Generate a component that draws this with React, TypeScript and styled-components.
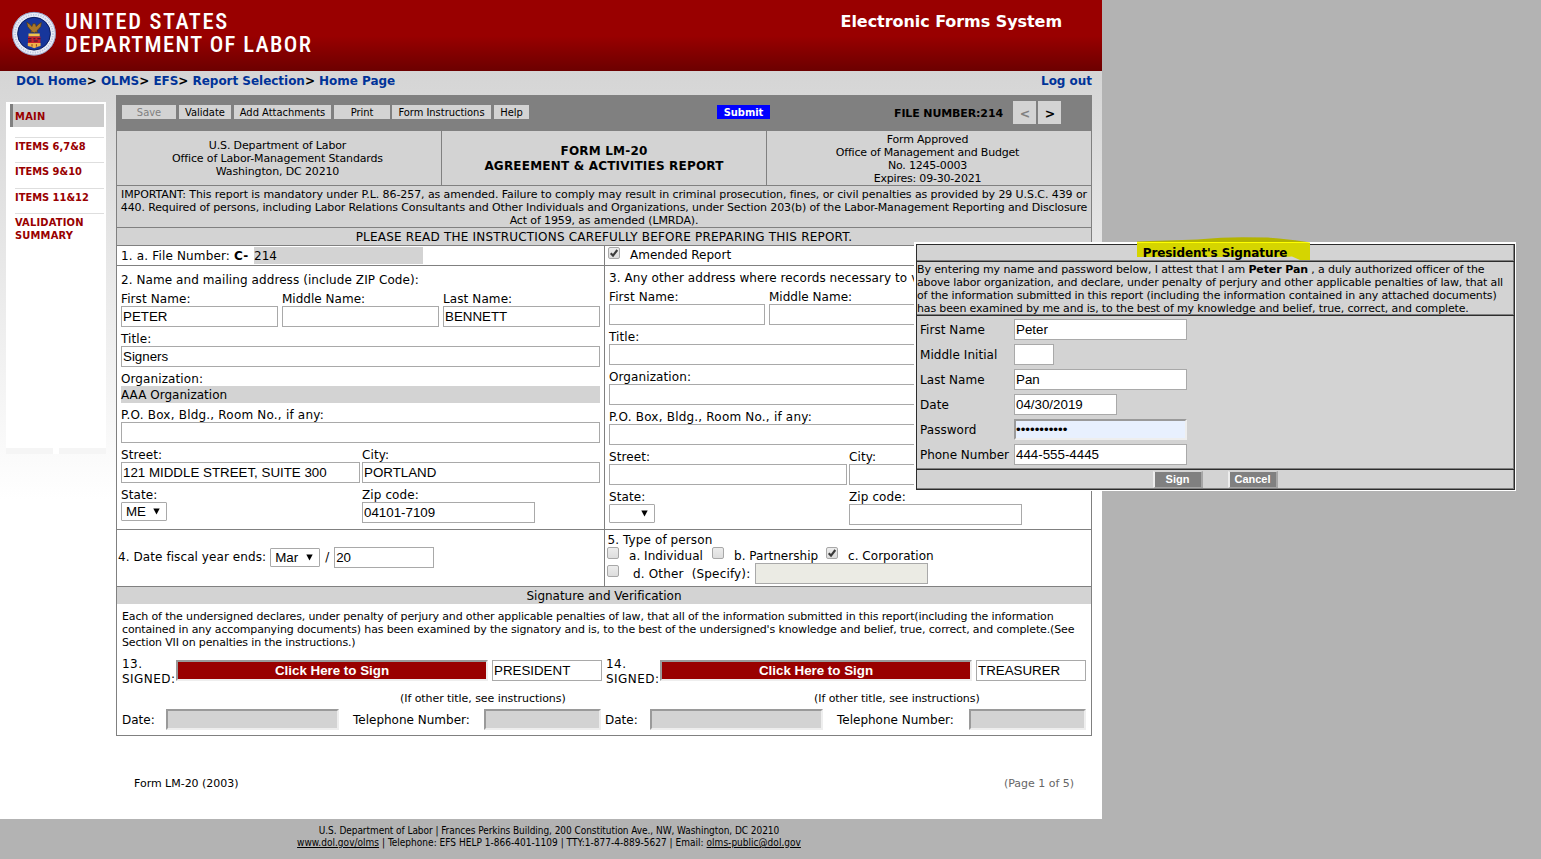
import React from 'react';
import styled, { createGlobalStyle, css } from 'styled-components';

const VERDANA = 'Verdana, "DejaVu Sans", sans-serif';
const TAHOMA = 'Tahoma, "DejaVu Sans Condensed", "DejaVu Sans", sans-serif';
const ARIAL = '"Liberation Sans", Arial, sans-serif';
const LINE = '#808080';
const PANEL = '#d3d3d3';

const GlobalStyle = createGlobalStyle`
  *, *::before, *::after { box-sizing: border-box; }
  body {
    margin: 0;
    background: #b3b3b3;
    color: #000;
    font: 12px/15px ${VERDANA};
  }
  button, input { margin: 0; border-radius: 0; outline: none; }
`;

const Screen = styled.div`
  position: relative;
  width: 1541px;
  height: 859px;
  overflow: hidden;
`;

const Page = styled.div`
  width: 1102px;
  height: 819px;
  background: linear-gradient(#d5d5d5 71px, #fff 500px);
`;

/* ---------- Banner ---------- */

const Banner = styled.header`
  display: flex;
  justify-content: space-between;
  height: 71px;
  padding: 10px 40px 0 11px;
  background: linear-gradient(#990000 36px, #6c0000 71px);
  color: #fff;
`;

const Brand = styled.div`
  display: flex;
  gap: 8px;
`;

const BrandName = styled.div`
  font: 500 22.5px/23px "Roboto Condensed", Roboto, sans-serif;
  white-space: nowrap;
`;

const BrandLine = styled.div<{ $ls: number }>`
  letter-spacing: ${(p) => p.$ls}px;
`;

const SystemName = styled.div`
  padding-top: 1px;
  font: bold 16px/22px ${VERDANA};
  letter-spacing: -0.06px;
`;

/* ---------- Breadcrumb ---------- */

const CrumbBar = styled.nav`
  display: flex;
  justify-content: space-between;
  height: 24px;
  padding: 3px 10px 0 16px;
  font: bold 12px/15px ${VERDANA};
  letter-spacing: -0.03px;
`;

const Link = styled.a`
  color: #003399;
  text-decoration: none;
`;

/* ---------- Sidebar ---------- */

const Body = styled.div`
  display: flex;
  gap: 10px;
  padding-left: 6px;
`;

const SideColumn = styled.aside`
  width: 100px;
  padding-top: 7px;
`;

const SideMenu = styled.div`
  height: 346px;
  padding: 2px 2px 0 4px;
  background: #fff;
  font: bold 11px/13px ${TAHOMA};
  color: #990000;
`;

const CurrentItem = styled.div`
  height: 23px;
  margin-bottom: 10px;
  padding: 6px 0 0 2px;
  border-left: 3px solid ${LINE};
  background: #ccc;
  letter-spacing: 0.3px;
`;

const SideItem = styled.div<{ $ls?: number }>`
  height: 25.4px;
  margin-left: 5px;
  padding-top: 2px;
  border-top: 1px solid #dedede;
  letter-spacing: ${(p) => p.$ls ?? 0}px;
`;

const SideTabs = styled.div`
  display: flex;
  justify-content: space-between;
  height: 6px;
  background: #fff;
`;

const SideTab = styled.div`
  width: 47px;
  background: #f5f5f5;
`;

/* ---------- Form frame ---------- */

const FormColumn = styled.main`
  width: 976px;
`;

const FormBox = styled.div`
  height: 641px;
  border: 1px solid ${LINE};
  border-top: 0;
  background: #fff;
`;

const Toolbar = styled.div`
  display: flex;
  gap: 3px;
  height: 36px;
  padding: 10px 0 0 5px;
  background: ${LINE};
`;

const ToolButton = styled.button<{ $w: number; $primary?: boolean; $off?: boolean; $tight?: boolean }>`
  width: ${(p) => p.$w}px;
  height: 14px;
  margin-right: ${(p) => (p.$tight ? -1 : 0)}px;
  padding: 1px 0 0;
  border: 0;
  background: ${(p) => (p.$primary ? '#0000ff' : PANEL)};
  color: ${(p) => (p.$primary ? '#fff' : p.$off ? '#808080' : '#000')};
  font: ${(p) => (p.$primary ? 'bold' : 'normal')} 11px/13px ${TAHOMA};
  white-space: nowrap;
`;

const SubmitSlot = styled.div`
  display: flex;
  margin-left: 185px;
`;

const FileNumber = styled.div`
  width: 119px;
  margin-left: 121px;
  padding-top: 2px;
  font: bold 11px/13px ${VERDANA};
  letter-spacing: -0.12px;
  white-space: nowrap;
`;

const Pager = styled.div`
  display: flex;
  gap: 2px;
  margin: -4px 0 0 -3px;
`;

const PageButton = styled.button<{ $off?: boolean }>`
  width: 23px;
  height: 23px;
  padding: 2px 0 0 1px;
  border: 0;
  background: ${PANEL};
  color: ${(p) => (p.$off ? '#808080' : '#000')};
  font: bold 12.5px/20px ${VERDANA};
`;

const TitleRow = styled.div`
  display: flex;
  height: 55px;
  border-bottom: 1px solid ${LINE};
  background: ${PANEL};
`;

const TitleCell = styled.div<{ $strong?: boolean; $ls?: number; $top?: number }>`
  display: flex;
  flex-direction: column;
  justify-content: center;
  flex: 1;
  padding: ${(p) => p.$top ?? 0}px 3px 0 0;
  text-align: center;
  font: 11px/13px ${VERDANA};
  letter-spacing: ${(p) => p.$ls ?? -0.14}px;
  ${(p) =>
    p.$strong &&
    css`
      flex: 0 0 326px;
      padding: 1px 0 0;
      border: solid ${LINE};
      border-width: 0 1px;
      font: bold 12px/15px ${VERDANA};
      letter-spacing: 0.2px;
    `}
`;

const Notice = styled.div`
  height: 42px;
  padding-top: 2px;
  border-bottom: 1px solid ${LINE};
  background: ${PANEL};
  font: 11px/13px ${VERDANA};
  letter-spacing: -0.13px;
  text-align: center;
  white-space: nowrap;
`;

const NoticeLead = styled.div`
  letter-spacing: -0.084px;
`;

const Instruction = styled.div`
  height: 18px;
  padding-top: 2px;
  border-bottom: 1px solid ${LINE};
  background: ${PANEL};
  letter-spacing: 0.197px;
  text-align: center;
`;

const Split = styled.div<{ $h: number }>`
  display: grid;
  grid-template-columns: 488px 486px;
  height: ${(p) => p.$h}px;
  border-bottom: 1px solid ${LINE};
  & > :first-child {
    border-right: 1px solid ${LINE};
  }
`;

const Half = styled.div`
  overflow: hidden;
  white-space: nowrap;
`;

const FileCell = styled(Half)`
  display: flex;
  align-items: center;
  padding-left: 4px;
  letter-spacing: 0.16px;
`;

const FileLabel = styled.span`
  width: 133px;
  padding-top: 1px;
`;

const ReadOnlyValue = styled.span<{ $w: number }>`
  display: block;
  width: ${(p) => p.$w}px;
  height: 17px;
  background: ${PANEL};
  line-height: 18px;
  letter-spacing: 0.02px;
`;

const AmendedCell = styled(Half)`
  display: flex;
  gap: 10px;
  padding: 1px 0 0 3px;
  line-height: 17px;
`;

/* ---------- Form controls ---------- */

const inset = css`
  border: 2px solid;
  border-color: #9a9a9a #eeeeee #eeeeee #9a9a9a;
`;

const Input = styled.input<{ $w: number; $tone?: 'plain' | 'autofill' | 'inset' | 'disabled' }>`
  display: block;
  flex: none;
  width: ${(p) => p.$w}px;
  height: 21px;
  padding: 1px;
  border: 1px solid #a9a9a9;
  background: #fff;
  color: #000;
  font: 13.333px/17px ${ARIAL};
  ${(p) => p.$tone === 'disabled' && 'background: #ebebe4;'}
  ${(p) =>
    p.$tone === 'inset' &&
    css`
      ${inset}
      background: ${PANEL};
    `}
  ${(p) =>
    p.$tone === 'autofill' &&
    css`
      ${inset}
      padding: 0;
      background: #e8f0fe;
    `}
`;

const SelectBox = styled.div<{ $w: number }>`
  display: flex;
  flex: none;
  justify-content: space-between;
  align-items: center;
  width: ${(p) => p.$w}px;
  height: 19px;
  padding: 0 6px 0 4px;
  border: 1px solid #a9a9a9;
  border-radius: 1px;
  background: #fff;
  font: 13.333px/17px ${ARIAL};
  letter-spacing: 0;
`;

const Select = ({ w, value }: { w: number; value?: string }) => (
  <SelectBox $w={w}>
    <span>{value}</span>
    <svg width="7" height="7" viewBox="0 0 7 7">
      <path d="M0.3 0.5h6.4L3.5 6.5z" fill="#000" />
    </svg>
  </SelectBox>
);

const CheckFrame = styled.span`
  display: flex;
  flex: none;
  width: 12px;
  height: 12px;
  border: 1px solid #a8a8a8;
  border-radius: 2px;
  background: linear-gradient(#ececec, #dddddd);
`;

const Check = ({ on }: { on?: boolean }) => (
  <CheckFrame>
    {on && (
      <svg width="10" height="10" viewBox="0 0 10 10">
        <path d="M1.7 5.3 4 7.6 8.3 2" fill="none" stroke="#3c3c3c" strokeWidth="2.1" />
      </svg>
    )}
  </CheckFrame>
);

const Address = styled(Half)<{ $top: number }>`
  padding: ${(p) => p.$top}px 4px 0;
`;

const FieldRow = styled.div`
  display: flex;
`;

const FieldBox = styled.div<{ $w: number; $gap?: number }>`
  flex: none;
  width: ${(p) => p.$w}px;
  margin-right: ${(p) => p.$gap ?? 0}px;
`;

const Label = styled.div<{ $ls?: number }>`
  height: 19px;
  padding-top: 5px;
  line-height: 14px;
  letter-spacing: ${(p) => p.$ls ?? 0.1}px;
`;

const Heading = styled.div<{ $w?: number }>`
  width: ${(p) => (p.$w ? `${p.$w}px` : 'auto')};
  height: 15px;
  overflow: hidden;
  line-height: 16px;
  letter-spacing: 0.08px;
`;

interface FieldProps {
  label?: string;
  w: number;
  gap?: number;
  inner?: number;
  ls?: number;
  value?: string;
  kind?: 'input' | 'select' | 'readonly';
}

const Field = ({ label, w, gap, inner, ls, value, kind = 'input' }: FieldProps) => (
  <FieldBox $w={w} $gap={gap}>
    <Label $ls={ls}>{label}</Label>
    {kind === 'input' && <Input $w={inner ?? w} defaultValue={value} />}
    {kind === 'select' && <Select w={inner ?? w} value={value} />}
    {kind === 'readonly' && <ReadOnlyValue $w={w}>{value}</ReadOnlyValue>}
  </FieldBox>
);

const FiscalCell = styled(Half)`
  display: flex;
  align-items: center;
  gap: 4px;
  padding: 0 0 1px 1px;
  letter-spacing: 0.08px;
`;

const Slash = styled.span`
  width: 6px;
  padding-left: 1px;
`;

const PersonCell = styled(Half)`
  padding: 2px 0 0 2px;
`;

const PersonTitle = styled.div`
  height: 15px;
  padding: 1px 0 0 0.5px;
  line-height: 14px;
  letter-spacing: 0.1px;
`;

const PersonRow = styled.div<{ $h: number }>`
  display: flex;
  height: ${(p) => p.$h}px;
`;

const CheckSlot = styled.div`
  padding-top: 2px;
`;

const Option = styled.span<{ $w: number; $x?: number; $y?: number; $ls?: number }>`
  flex: none;
  width: ${(p) => p.$w}px;
  padding: ${(p) => p.$y ?? 2}px 0 0 ${(p) => p.$x ?? 10}px;
  line-height: 14px;
  letter-spacing: ${(p) => p.$ls ?? 0.04}px;
  white-space: pre;
`;

/* ---------- Signature section ---------- */

const Band = styled.div`
  height: 17px;
  background: ${PANEL};
  line-height: 18px;
  letter-spacing: -0.02px;
  text-align: center;
`;

const Declaration = styled.div`
  height: 56px;
  padding: 6px 0 0 5px;
  font: 11px/13px ${VERDANA};
  letter-spacing: -0.147px;
  white-space: nowrap;
`;

const SignRow = styled.div`
  display: flex;
  gap: 4px;
  height: 30px;
  padding-left: 5px;
`;

const SignBlock = styled.div`
  display: flex;
  width: 480px;
`;

const SignLabel = styled.div`
  width: 54px;
  margin-top: -3px;
  letter-spacing: 0.45px;
`;

const SignButton = styled.button`
  ${inset}
  width: 312px;
  height: 21px;
  margin-right: 4px;
  padding: 0;
  background: #990000;
  color: #fff;
  font: bold 13.333px/17px ${ARIAL};
`;

const HintRow = styled.div`
  display: flex;
  height: 19px;
  padding-top: 1px;
  font: 11px/15px ${VERDANA};
  letter-spacing: -0.06px;
`;

const Hint = styled.span<{ $left: number }>`
  width: 166px;
  margin-left: ${(p) => p.$left}px;
  white-space: nowrap;
`;

const DateRow = styled.div`
  display: flex;
  padding-left: 5px;
  line-height: 22px;
`;

const DateCell = styled.span<{ $w: number; $x?: number }>`
  flex: none;
  width: ${(p) => p.$w}px;
  height: 21px;
  padding-left: ${(p) => p.$x ?? 0}px;
  white-space: nowrap;
`;

const PageInfo = styled.div`
  display: flex;
  justify-content: space-between;
  padding: 41px 18px 0 18px;
  font: 11px/13px ${VERDANA};
  letter-spacing: -0.02px;
`;

const PageCount = styled.span`
  color: #666;
`;

const Footer = styled.footer`
  width: 1098px;
  padding-top: 6px;
  font: 10px/12px ${TAHOMA};
  letter-spacing: -0.054px;
  text-align: center;
`;

const Contact = styled.div`
  letter-spacing: 0.023px;
`;

/* ---------- Signature dialog ---------- */

const Dialog = styled.section`
  position: absolute;
  left: 914px;
  top: 242px;
  width: 602px;
  height: 249px;
  border: solid #fff;
  border-width: 2px 1px 1px 2px;
`;

const DialogFrame = styled.div`
  height: 246px;
  border: 1px solid #2c2c2c;
  background: ${PANEL};
`;

const DialogSection = styled.div<{ $h: number; $last?: boolean }>`
  height: ${(p) => p.$h}px;
  border-right: 1px solid ${LINE};
  border-bottom: 1px solid ${LINE};
  ${(p) => !p.$last && 'box-shadow: 0 1px #2c2c2c; margin-bottom: 1px;'}
`;

const DialogTitle = styled(DialogSection)`
  font: bold 12px/16px ${VERDANA};
  letter-spacing: -0.09px;
  text-align: center;
`;

const TitleText = styled.span`
  position: relative;
  z-index: 2;
`;

const Highlight = styled.svg`
  position: absolute;
  z-index: 1;
  left: 221px;
  top: -7px;
`;

const Statement = styled(DialogSection)`
  padding-top: 1px;
  font: 11px/13px ${VERDANA};
  letter-spacing: -0.152px;
  white-space: nowrap;
`;

const StatementLead = styled.div`
  letter-spacing: -0.115px;
`;

const DialogFields = styled(DialogSection)`
  display: flex;
  flex-direction: column;
  gap: 4px;
  padding: 3px 0 0 3px;
`;

const DialogRow = styled.label`
  display: flex;
  height: 21px;
  line-height: 22px;
`;

const DialogLabel = styled.span<{ $ls?: number }>`
  width: 94px;
  letter-spacing: ${(p) => p.$ls ?? 0.05}px;
  white-space: nowrap;
`;

const DialogActions = styled(DialogSection)`
  display: flex;
  justify-content: center;
  gap: 25px;
  padding-top: 1px;
`;

const DialogButton = styled.button`
  width: 50px;
  height: 17px;
  padding: 0;
  border: solid;
  border-width: 1px 2px;
  border-color: ${PANEL} #a6a6a6 #a6a6a6 #eeeeee;
  background: #808080;
  color: #fff;
  font: bold 11px/13px ${ARIAL};
`;

const Seal = () => (
  <svg width="46" height="46" viewBox="0 0 46 46">
    <circle cx="23" cy="23.7" r="21.8" fill="#e9ecf6" />
    <circle cx="23" cy="23.7" r="21.4" fill="none" stroke="#6f7fb5" strokeWidth="0.7" />
    <circle cx="23" cy="23.7" r="18.9" fill="none" stroke="#bac4e2" strokeWidth="1.8" strokeDasharray="1.2 1.3" />
    <circle cx="23" cy="23.7" r="16.4" fill="#17369b" stroke="#0c1c5e" strokeWidth="1" />
    <path
      d="M15.8 12.2 18.4 14l2.6 2.6.8-2.8h2.6l.8 2.8 2.4-2.4 2.8-1.8-.6 4.2-2.6 3-1.2 1 .6 1.8-2-.4-1.4 1-1.4-1-2 .4.6-1.8-1.4-1-2.4-3z"
      fill="#a8762a"
      stroke="#4a3514"
      strokeWidth="0.6"
    />
    <path d="M17.5 23.5h11.2v3H17.5z" fill="#f1c34c" />
    <path d="M17 26.5h12.4v6.5H17z" fill="#c4202a" />
    <path d="M17 28.8h3.4m2 0h2m2 0h3M17.5 31h3m2.2 0h4" stroke="#2c1333" strokeWidth="1.1" />
    <path d="M16.8 33h12.8v3l-3 .8-3.4 1.4-3.4-1.4-3-.8z" fill="#efb24a" />
    <path d="M21 34.2v2.4m4.4-2.4v2.4" stroke="#8c3a1c" strokeWidth="1" />
  </svg>
);

const MARK =
  'M0 4.5 12 4 38 3.2 60 2.4 84 .8 105 .2 131 .5 142 1.6 158 3.2 167 4.5 173 5.5V23H163L155 19.5 146 20H0z';

const HighlightMark = () => (
  <Highlight width="173" height="24" viewBox="0 0 173 24">
    <defs>
      <clipPath id="mark">
        <path d={MARK} />
      </clipPath>
    </defs>
    <g clipPath="url(#mark)">
      <rect width="173" height="5" fill="#b4b400" />
      <rect y="5" width="173" height="2" fill="#ffff00" />
      <rect y="6" width="173" height="18" fill="#d5d500" />
    </g>
  </Highlight>
);

const crumbs = ['DOL Home', 'OLMS', 'EFS', 'Report Selection', 'Home Page'];
const menu = ['ITEMS 6,7&8', 'ITEMS 9&10', 'ITEMS 11&12'];
const signers = [
  { no: '13.', title: 'PRESIDENT' },
  { no: '14.', title: 'TREASURER' },
];

export default function App() {
  return (
    <Screen>
      <GlobalStyle />
      <Page>
        <Banner>
          <Brand>
            <Seal />
            <BrandName>
              <BrandLine $ls={1.6}>UNITED STATES</BrandLine>
              <BrandLine $ls={1.35}>DEPARTMENT OF LABOR</BrandLine>
            </BrandName>
          </Brand>
          <SystemName>Electronic Forms System</SystemName>
        </Banner>
        <CrumbBar>
          <div>
            {crumbs.map((c, i) => (
              <React.Fragment key={c}>
                <Link>{c}</Link>
                {i < crumbs.length - 1 && '> '}
              </React.Fragment>
            ))}
          </div>
          <Link>Log out</Link>
        </CrumbBar>
        <Body>
          <SideColumn>
            <SideMenu>
              <CurrentItem>MAIN</CurrentItem>
              {menu.map((m) => (
                <SideItem key={m}>{m}</SideItem>
              ))}
              <SideItem $ls={0.2}>
                VALIDATION
                <br />
                SUMMARY
              </SideItem>
            </SideMenu>
            <SideTabs>
              <SideTab />
              <SideTab />
            </SideTabs>
          </SideColumn>
          <FormColumn>
            <FormBox>
              <Toolbar>
                <ToolButton $w={54} $off>Save</ToolButton>
                <ToolButton $w={52}>Validate</ToolButton>
                <ToolButton $w={97}>Add Attachments</ToolButton>
                <ToolButton $w={56} $tight>Print</ToolButton>
                <ToolButton $w={99}>Form Instructions</ToolButton>
                <ToolButton $w={35}>Help</ToolButton>
                <SubmitSlot>
                  <ToolButton $w={53} $primary>Submit</ToolButton>
                </SubmitSlot>
                <FileNumber>FILE NUMBER:214</FileNumber>
                <Pager>
                  <PageButton $off>&lt;</PageButton>
                  <PageButton>&gt;</PageButton>
                </Pager>
              </Toolbar>
              <TitleRow>
                <TitleCell>
                  <div>U.S. Department of Labor</div>
                  <div>Office of Labor-Management Standards</div>
                  <div>Washington, DC 20210</div>
                </TitleCell>
                <TitleCell $strong>
                  <div>FORM LM-20</div>
                  <div>AGREEMENT &amp; ACTIVITIES REPORT</div>
                </TitleCell>
                <TitleCell $ls={-0.2} $top={2}>
                  <div>Form Approved</div>
                  <div>Office of Management and Budget</div>
                  <div>No. 1245-0003</div>
                  <div>Expires: 09-30-2021</div>
                </TitleCell>
              </TitleRow>
              <Notice>
                <NoticeLead>
                  IMPORTANT: This report is mandatory under P.L. 86-257, as amended. Failure to comply may result in
                  criminal prosecution, fines, or civil penalties as provided by 29 U.S.C. 439 or
                </NoticeLead>
                440. Required of persons, including Labor Relations Consultants and Other Individuals and Organizations,
                under Section 203(b) of the Labor-Management Reporting and Disclosure
                <br />
                Act of 1959, as amended (LMRDA).
              </Notice>
              <Instruction>PLEASE READ THE INSTRUCTIONS CAREFULLY BEFORE PREPARING THIS REPORT.</Instruction>
              <Split $h={20}>
                <FileCell>
                  <FileLabel>
                    1. a. File Number: <b>C-</b>
                  </FileLabel>
                  <ReadOnlyValue $w={169}>214</ReadOnlyValue>
                </FileCell>
                <AmendedCell>
                  <Check on />
                  Amended Report
                </AmendedCell>
              </Split>
              <Split $h={264}>
                <Address $top={6}>
                  <Heading>2. Name and mailing address (include ZIP Code):</Heading>
                  <FieldRow>
                    <Field label="First Name:" w={157} gap={4} value="PETER" />
                    <Field label="Middle Name:" w={157} gap={4} ls={0.02} />
                    <Field label="Last Name:" w={157} value="BENNETT" />
                  </FieldRow>
                  <Field label="Title:" w={479} value="Signers" />
                  <Field label="Organization:" w={479} value="AAA Organization" kind="readonly" />
                  <Field label="P.O. Box, Bldg., Room No., if any:" w={479} ls={0.2} />
                  <FieldRow>
                    <Field label="Street:" w={239} gap={2} value="121 MIDDLE STREET, SUITE 300" />
                    <Field label="City:" w={238} value="PORTLAND" />
                  </FieldRow>
                  <FieldRow>
                    <Field label="State:" w={239} gap={2} inner={46} value="ME" kind="select" />
                    <Field label="Zip code:" w={238} inner={173} value="04101-7109" />
                  </FieldRow>
                </Address>
                <Address $top={4}>
                  <Heading $w={305}>3. Any other address where records necessary to v</Heading>
                  <FieldRow>
                    <Field label="First Name:" w={156} gap={4} />
                    <Field label="Middle Name:" w={156} gap={4} ls={0.02} />
                    <Field w={156} />
                  </FieldRow>
                  <Field label="Title:" w={478} />
                  <Field label="Organization:" w={478} />
                  <Field label="P.O. Box, Bldg., Room No., if any:" w={478} ls={0.2} />
                  <FieldRow>
                    <Field label="Street:" w={238} gap={2} />
                    <Field label="City:" w={238} />
                  </FieldRow>
                  <FieldRow>
                    <Field label="State:" w={238} gap={2} inner={46} kind="select" />
                    <Field label="Zip code:" w={238} inner={173} />
                  </FieldRow>
                </Address>
              </Split>
              <Split $h={57}>
                <FiscalCell>
                  4. Date fiscal year ends:
                  <Select w={50} value="Mar" />
                  <Slash>/</Slash>
                  <Input $w={100} defaultValue="20" />
                </FiscalCell>
                <PersonCell>
                  <PersonTitle>5. Type of person</PersonTitle>
                  <PersonRow $h={16}>
                    <Check />
                    <Option $w={93}>a. Individual</Option>
                    <Check />
                    <Option $w={102}>b. Partnership</Option>
                    <Check on />
                    <Option $w={110}>c. Corporation</Option>
                  </PersonRow>
                  <PersonRow $h={21}>
                    <CheckSlot>
                      <Check />
                    </CheckSlot>
                    <Option $w={136} $x={14} $y={4} $ls={0.17}>{'d. Other  (Specify):'}</Option>
                    <Input $w={173} $tone="disabled" readOnly />
                  </PersonRow>
                </PersonCell>
              </Split>
              <Band>Signature and Verification</Band>
              <Declaration>
                Each of the undersigned declares, under penalty of perjury and other applicable penalties of law, that all of
                the information submitted in this report(including the information
                <br />
                contained in any accompanying documents) has been examined by the signatory and is, to the best of the
                undersigned's knowledge and belief, true, correct, and complete.(See
                <br />
                Section VII on penalties in the instructions.)
              </Declaration>
              <SignRow>
                {signers.map((s) => (
                  <SignBlock key={s.no}>
                    <SignLabel>
                      {s.no}
                      <br />
                      SIGNED:
                    </SignLabel>
                    <SignButton>Click Here to Sign</SignButton>
                    <Input $w={110} defaultValue={s.title} />
                  </SignBlock>
                ))}
              </SignRow>
              <HintRow>
                <Hint $left={283}>(If other title, see instructions)</Hint>
                <Hint $left={248}>(If other title, see instructions)</Hint>
              </HintRow>
              <DateRow>
                <DateCell $w={44}>Date:</DateCell>
                <Input $w={173} $tone="inset" readOnly />
                <DateCell $w={145} $x={14}>Telephone Number:</DateCell>
                <Input $w={117} $tone="inset" readOnly />
                <DateCell $w={49} $x={4}>Date:</DateCell>
                <Input $w={173} $tone="inset" readOnly />
                <DateCell $w={146} $x={14}>Telephone Number:</DateCell>
                <Input $w={117} $tone="inset" readOnly />
              </DateRow>
            </FormBox>
            <PageInfo>
              <span>Form LM-20 (2003)</span>
              <PageCount>(Page 1 of 5)</PageCount>
            </PageInfo>
          </FormColumn>
        </Body>
      </Page>
      <Footer>
        U.S. Department of Labor | Frances Perkins Building, 200 Constitution Ave., NW, Washington, DC 20210
        <Contact>
          <u>www.dol.gov/olms</u> | Telephone: EFS HELP 1-866-401-1109 | TTY:1-877-4-889-5627 | Email:{' '}
          <u>olms-public@dol.gov</u>
        </Contact>
      </Footer>
      <Dialog>
        <DialogFrame>
          <DialogTitle $h={16}>
            <TitleText>President's Signature</TitleText>
          </DialogTitle>
          <HighlightMark />
          <Statement $h={53}>
            <StatementLead>
              By entering my name and password below, I attest that I am <b>Peter Pan</b> , a duly authorized officer of the
            </StatementLead>
            above labor organization, and declare, under penalty of perjury and other applicable penalties of law, that all
            <br />
            of the information submitted in this report (including the information contained in any attached documents)
            <br />
            has been examined by me and is, to the best of my knowledge and belief, true, correct, and complete.
          </Statement>
          <DialogFields $h={153}>
            <DialogRow>
              <DialogLabel>First Name</DialogLabel>
              <Input $w={173} defaultValue="Peter" />
            </DialogRow>
            <DialogRow>
              <DialogLabel>Middle Initial</DialogLabel>
              <Input $w={40} />
            </DialogRow>
            <DialogRow>
              <DialogLabel>Last Name</DialogLabel>
              <Input $w={173} defaultValue="Pan" />
            </DialogRow>
            <DialogRow>
              <DialogLabel>Date</DialogLabel>
              <Input $w={103} defaultValue="04/30/2019" />
            </DialogRow>
            <DialogRow>
              <DialogLabel>Password</DialogLabel>
              <Input $w={173} $tone="autofill" type="password" defaultValue="abcdefghijk" />
            </DialogRow>
            <DialogRow>
              <DialogLabel $ls={-0.02}>Phone Number</DialogLabel>
              <Input $w={173} defaultValue="444-555-4445" />
            </DialogRow>
          </DialogFields>
          <DialogActions $h={19} $last>
            <DialogButton>Sign</DialogButton>
            <DialogButton>Cancel</DialogButton>
          </DialogActions>
        </DialogFrame>
      </Dialog>
    </Screen>
  );
}
